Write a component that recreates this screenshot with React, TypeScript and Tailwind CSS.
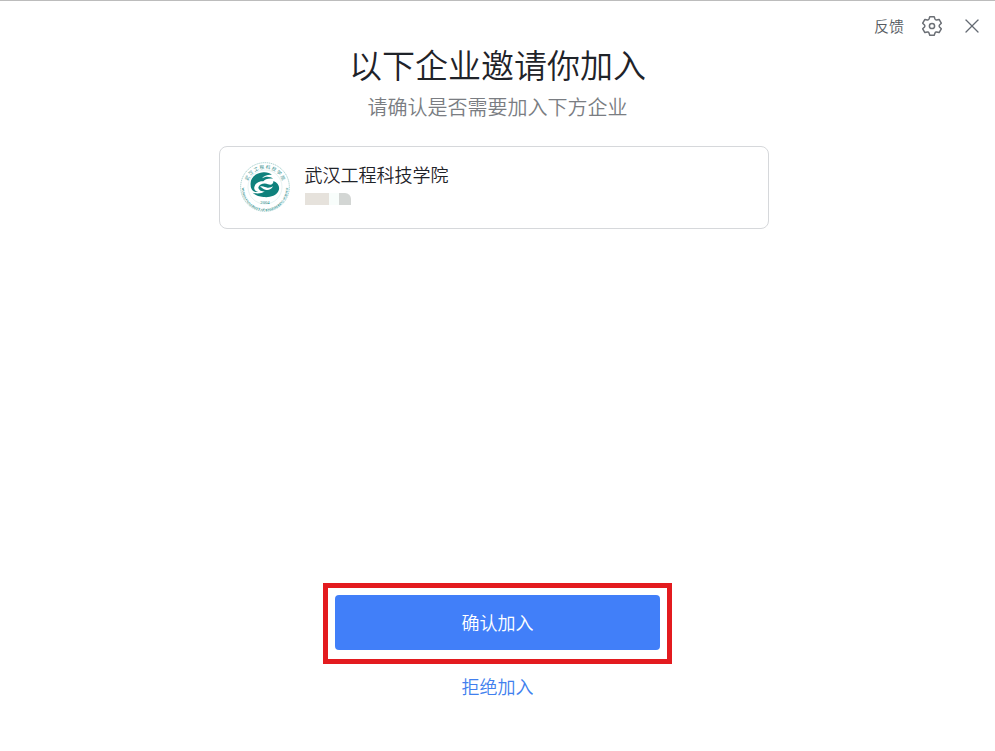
import React from 'react';
import { X } from 'lucide-react';

interface Company {
    id: string;
    name: string;
}

const companies: Company[] = [{ id: 'wuhan', name: '武汉工程科技学院' }];

function GearIcon() {
    return (
        <svg
            className="size-6"
            viewBox="-12 -12 24 24"
            fill="none"
            stroke="currentColor"
            strokeWidth="1.5"
            strokeLinejoin="round"
            aria-hidden="true"
        >
            <path d="M-2.2 -9.3H2.2L3 -6.9Q3.4 -5.8 4.6 -6L7.1 -6.6L9.3 -2.8L7.5 -1Q6.7 0 7.5 1L9.3 2.8L7.1 6.6L4.6 6Q3.4 5.8 3 6.9L2.2 9.3H-2.2L-3 6.9Q-3.4 5.8 -4.6 6L-7.1 6.6L-9.3 2.8L-7.5 1Q-6.7 0 -7.5 -1L-9.3 -2.8L-7.1 -6.6L-4.6 -6Q-3.4 -5.8 -3 -6.9Z" />
            <circle r="2.6" />
        </svg>
    );
}

function SchoolLogo() {
    return (
        <svg className="mt-px size-[50px] shrink-0" viewBox="0 0 150 150" fill="#0f817c" aria-hidden="true">
            <defs>
                <path id="ring-top" d="M20 75A55 55 0 0 1 130 75" />
                <path id="ring-bottom" d="M7 66A69 69 0 1 0 143 66" />
            </defs>
            <circle cx="75" cy="75" r="73" fill="none" stroke="#0f817c" strokeWidth="1.5" strokeDasharray="4 2" opacity="0.7" />
            <circle cx="75" cy="75" r="51" fill="none" stroke="#0f817c" strokeWidth="1" opacity="0.3" />
            <text fontSize="14" fontFamily="'Noto Sans CJK SC', sans-serif">
                <textPath href="#ring-top" startOffset="50%" textAnchor="middle">
                    武 汉 工 程 科 技 学 院
                </textPath>
            </text>
            <text fontSize="9" fontWeight="700" fontFamily="'Liberation Serif', serif">
                <textPath href="#ring-bottom" startOffset="50%" textAnchor="middle">
                    WUHAN UNIVERSITY OF ENGINEERING SCIENCE
                </textPath>
            </text>
            {/* wave mark */}
            <path d="M32 70C29 49 46 33 70 31C80 30 90 33 96 39C84 37 72 42 66 49C76 42 91 43 99 50C85 48 74 52 70 58C56 57 45 65 43 75C41 83 48 88 55 90C46 91 39 88 36 83C33 79 32 75 32 70Z" />
            <path d="M38 92C50 97 66 95 74 88C64 89 55 84 55 76C58 66 74 62 84 67C94 71 101 66 100 57C116 62 121 78 115 88C107 103 88 107 70 105C56 104 45 99 38 92Z" />
            <path d="M60 74C68 70 76 76 82 77C89 78 95 75 99 73C94 83 84 86 76 83C70 81 67 77 60 74Z" fill="white" />
            <text x="75" y="126" fontSize="14" fontFamily="'Liberation Serif', serif" textAnchor="middle">
                2004
            </text>
        </svg>
    );
}

function CompanyCard({ company }: { company: Company }) {
    return (
        <li className="flex h-[83px] items-start rounded-lg border border-[#d6d8db] px-5 pt-3.5">
            <SchoolLogo />
            <div className="ml-[15px]">
                <h2 className="text-lg leading-[26px] text-[#1f2329]">{company.name}</h2>
                {/* masked member name */}
                <div className="mt-1.5 flex h-3">
                    <span className="w-6 bg-[#e6e2dc]" />
                    <span className="w-2.5 bg-[#f8fdfb]" />
                    <span className="w-3 rounded-tr-md bg-[#d3d6d4]" />
                </div>
            </div>
        </li>
    );
}

export default function App() {
    return (
        <div className="flex min-h-screen flex-col border-t border-[#bcbcbc] bg-white font-['Noto_Sans_CJK_SC',sans-serif] font-[350]">
            <header className="flex h-11 items-center justify-end pt-1.5 pr-[11px]">
                <button type="button" className="text-[15px] leading-6 text-[#555a61]">反馈</button>
                <button type="button" aria-label="设置" className="ml-4 text-[#6b6f75]">
                    <GearIcon />
                </button>
                <button type="button" aria-label="关闭" className="ml-4 text-[#646a73]">
                    <X size={24} strokeWidth={1.3} aria-hidden="true" />
                </button>
            </header>

            <main className="flex flex-1 flex-col items-center">
                <h1 className="text-[33px] leading-[38px] text-[#1f2329]">以下企业邀请你加入</h1>
                <p className="mt-2.5 text-xl leading-7 text-[#7a7d82]">请确认是否需要加入下方企业</p>

                <ul className="mt-[25px] mr-2 w-full max-w-[550px]">
                    {companies.map(company => (
                        <CompanyCard key={company.id} company={company} />
                    ))}
                </ul>

                <div className="mt-auto flex w-full max-w-[349px] flex-col items-center pb-[51px]">
                    <div className="w-full border-[5px] border-[#e31b1f] px-[7px] pt-[7px] pb-[9px]">
                        <button
                            type="button"
                            className="h-[55px] w-full rounded bg-[#417ff9] pb-0.5 text-lg text-white"
                        >
                            确认加入
                        </button>
                    </div>
                    <button type="button" className="mt-2 text-lg leading-7 text-[#417fee]">
                        拒绝加入
                    </button>
                </div>
            </main>
        </div>
    );
}
